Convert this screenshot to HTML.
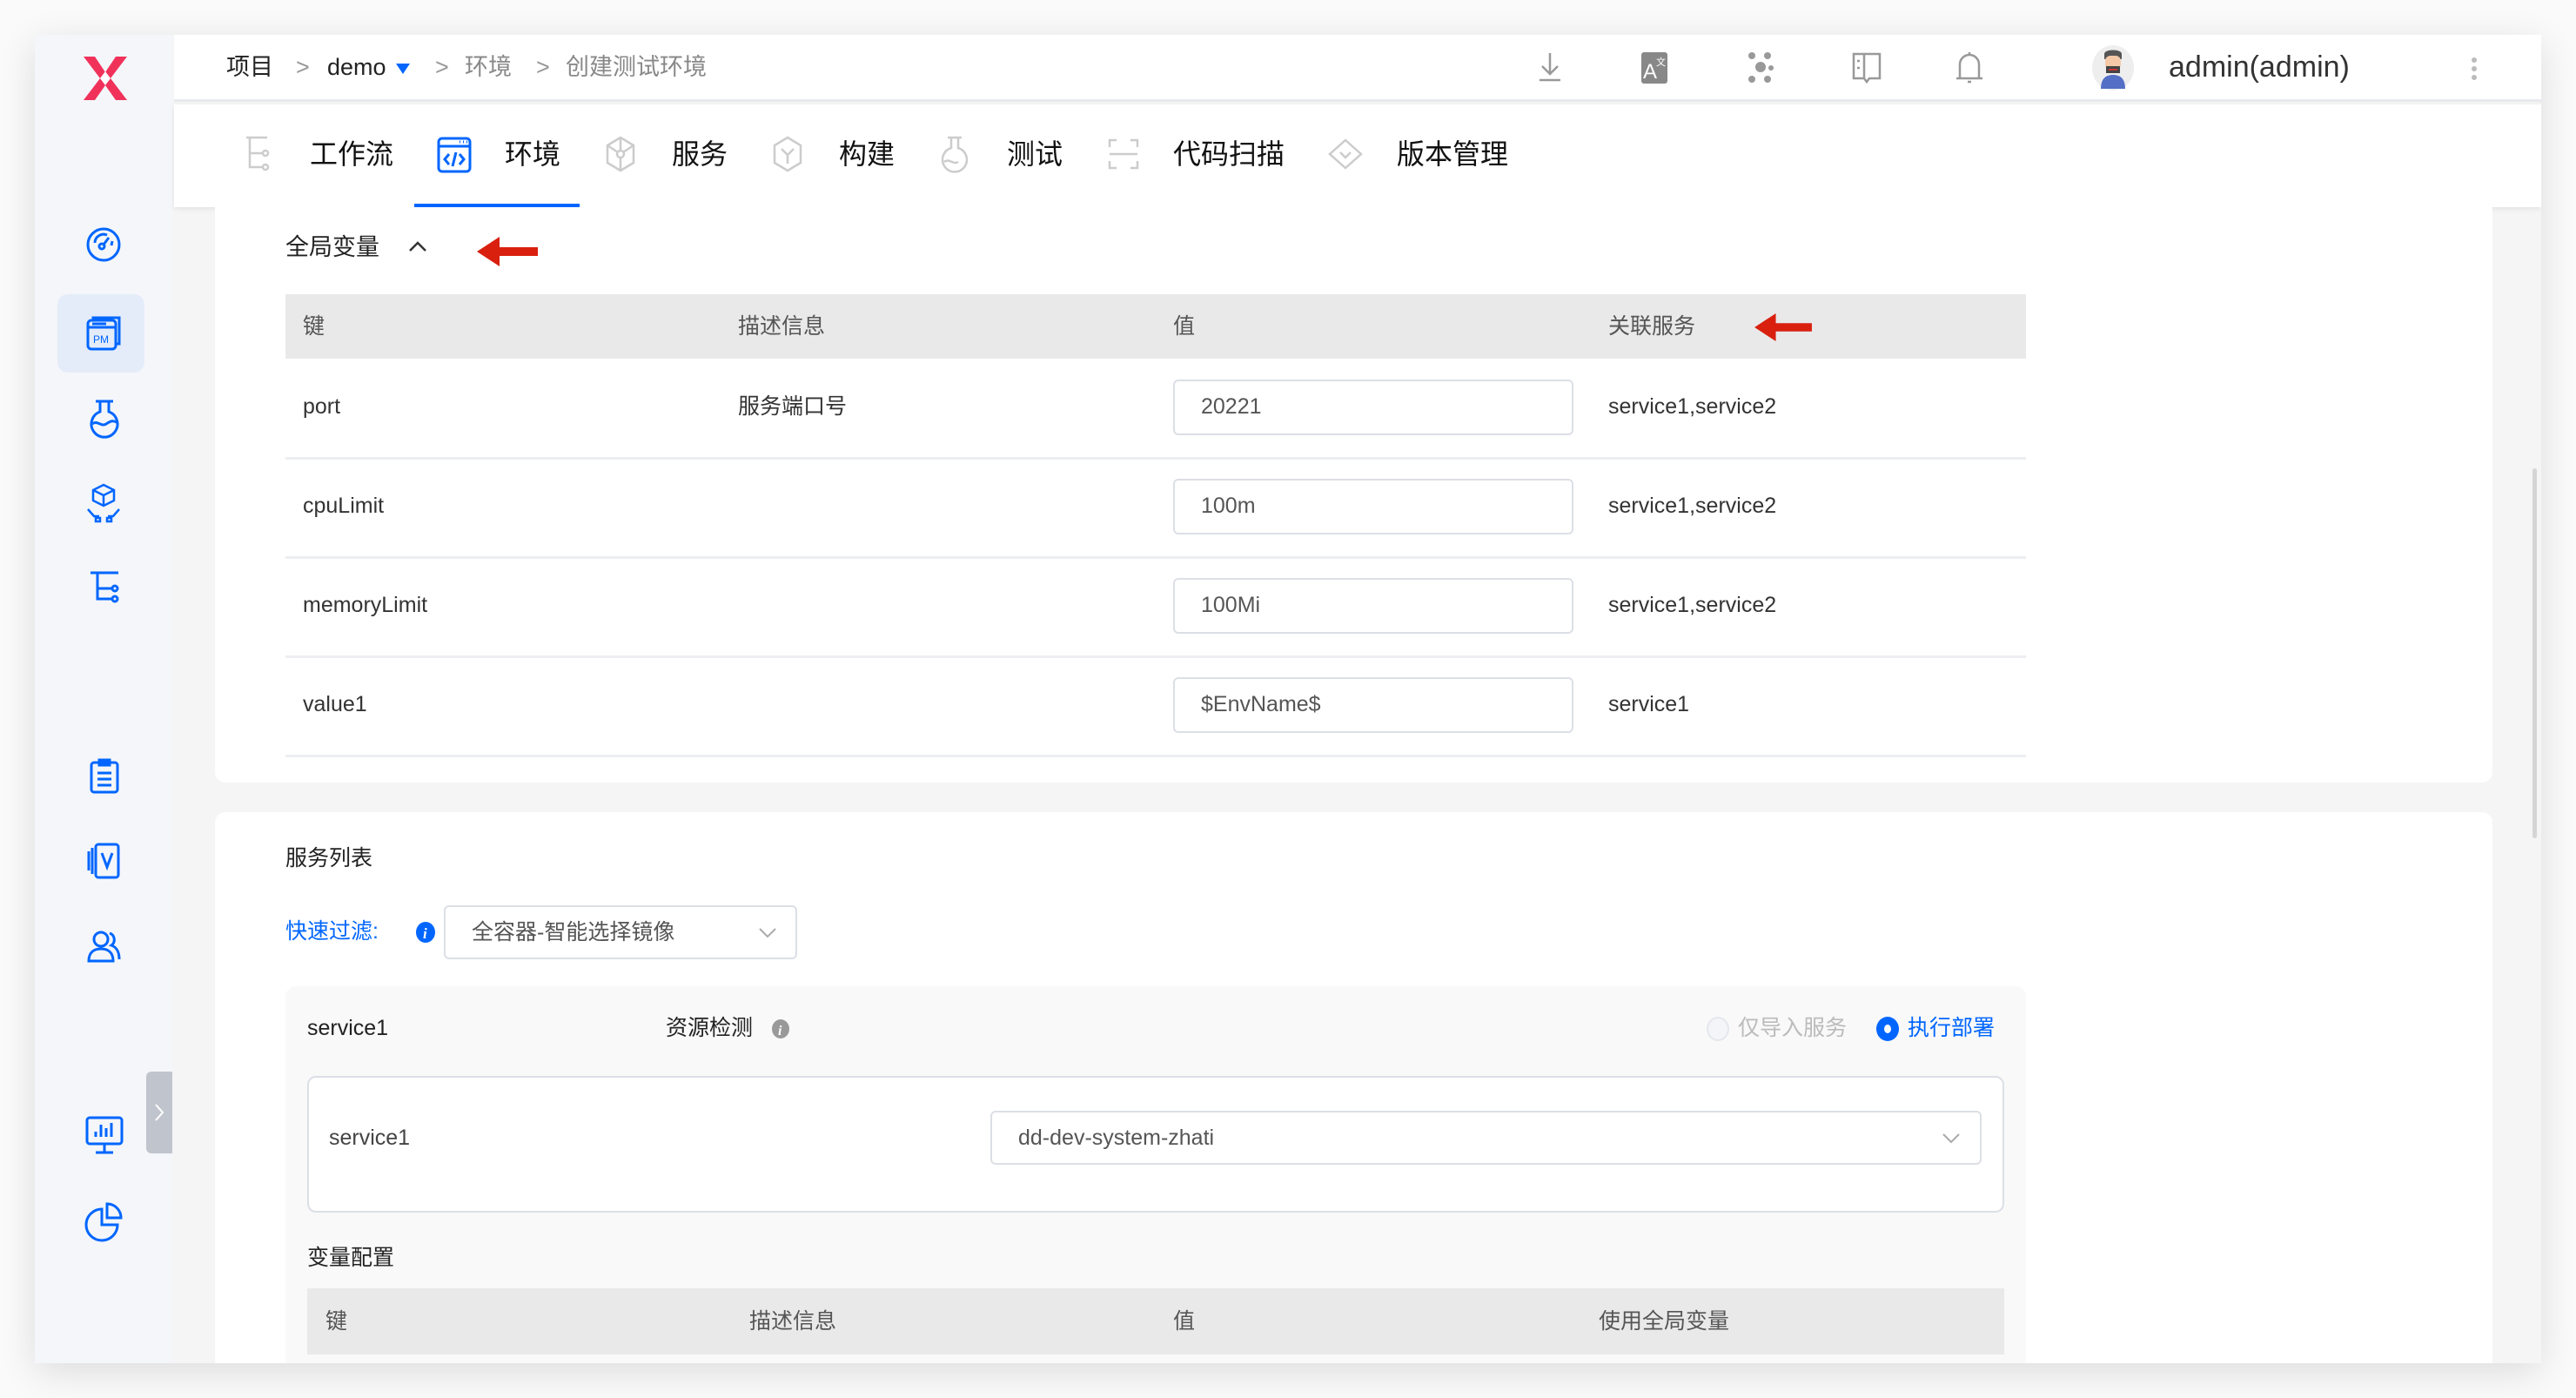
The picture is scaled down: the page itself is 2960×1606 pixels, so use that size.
<!DOCTYPE html>
<html><head><meta charset="utf-8">
<style>
*{margin:0;padding:0;box-sizing:border-box}
body{width:2960px;height:1606px;background:#fafafa;font-family:"Liberation Sans","Noto Sans CJK SC",sans-serif;position:relative;overflow:hidden;color:#333}
.a{position:absolute;white-space:nowrap}
#win{position:absolute;left:40px;top:40px;width:2880px;height:1526px;background:#f5f5f5;box-shadow:0 10px 40px rgba(0,0,0,.12);overflow:hidden}
.t28{font-size:27px;line-height:1}
.t26{font-size:25px;line-height:1}
.inp{position:absolute;background:#fff;border:2px solid #dcdfe6;border-radius:6px}
svg{position:absolute;overflow:visible}
</style></head><body>
<div id="win">
  <!-- sidebar -->
  <div class="a" style="left:0;top:0;width:158px;height:1526px;background:#f4f6fa"></div>
  <svg style="left:54px;top:25px" width="54" height="50" viewBox="0 0 54 50"><path d="M2 0h13l12 18 12-18h13L33 25l19 25H39L27 33 15 50H2l19-25z" fill="#f0325a"/><path d="M21 25l6-8 6 8-6 8z" fill="#fff"/></svg>
  <div class="a" style="left:26px;top:298px;width:100px;height:90px;background:#e4ecf9;border-radius:12px"></div>
  <svg style="left:59px;top:221px" width="40" height="40" viewBox="0 0 40 40" fill="none" stroke="#0066ff" stroke-width="3"><circle cx="20" cy="20" r="18"/><path d="M10 18a10 10 0 0 1 14-9"/><path d="M30 16l-1 5"/><circle cx="18" cy="22" r="3"/><path d="M20 20l6-8"/></svg>
  <svg style="left:59px;top:321px" width="42" height="42" viewBox="0 0 42 42" fill="none" stroke="#0066ff" stroke-width="3"><rect x="2" y="7" width="32" height="33" rx="4"/><path d="M8 7V4h30v30h-4"/><path d="M2 15h32M7 11h16"/><text x="8" y="33" font-size="12" fill="#0066ff" stroke="none" font-family="Liberation Sans">PM</text></svg>
  <svg style="left:62px;top:419px" width="36" height="42" viewBox="0 0 36 42" fill="none" stroke="#0066ff" stroke-width="3"><path d="M8 2h20M13 2v12a15 15 0 1 0 10 0V2"/><path d="M4 28c6-5 10 4 16 0s8-4 12-2"/></svg>
  <svg style="left:58px;top:515px" width="42" height="46" viewBox="0 0 42 46" fill="none" stroke="#0066ff" stroke-width="2.5"><path d="M21 2l12 6v12l-12 6-12-6V8zM9 8l12 6 12-6M21 14v12"/><path d="M3 30l7 8h6M39 30l-7 8h-6M12 40h5v4h-5zM25 40h5v4h-5z"/></svg>
  <svg style="left:62px;top:616px" width="36" height="40" viewBox="0 0 36 40" fill="none" stroke="#0066ff" stroke-width="3"><path d="M2 2h32M10 2v30h16M10 20h16"/><circle cx="30" cy="20" r="3"/><circle cx="30" cy="32" r="3"/></svg>
  <svg style="left:62px;top:830px" width="36" height="42" viewBox="0 0 36 42" fill="none" stroke="#0066ff" stroke-width="3"><rect x="3" y="6" width="30" height="34" rx="3"/><path d="M12 3h12v6H12zM10 18h16M10 25h16M10 32h16"/></svg>
  <svg style="left:60px;top:928px" width="40" height="42" viewBox="0 0 40 42" fill="none" stroke="#0066ff" stroke-width="3"><rect x="10" y="2" width="26" height="38" rx="3"/><path d="M6 6v30M2 10v22"/><path d="M17 12l6 16 6-16"/></svg>
  <svg style="left:60px;top:1028px" width="40" height="42" viewBox="0 0 40 42" fill="none" stroke="#0066ff" stroke-width="3"><circle cx="16" cy="11" r="8"/><path d="M2 36c0-10 6-14 14-14s14 4 14 14zM26 4a8 8 0 0 1 2 14c6 2 9 8 9 16"/></svg>
  <svg style="left:58px;top:1242px" width="44" height="44" viewBox="0 0 44 44" fill="none" stroke="#0066ff" stroke-width="3"><rect x="2" y="2" width="40" height="30" rx="3"/><path d="M22 32v10M12 42h20M12 24v-6M18 24V10M24 24v-10M30 24V8"/></svg>
  <svg style="left:59px;top:1341px" width="42" height="44" viewBox="0 0 42 44" fill="none" stroke="#0066ff" stroke-width="3"><path d="M18 8a18 18 0 1 0 18 18H18z"/><path d="M24 2a16 16 0 0 1 16 16H24z"/></svg>
  <div class="a" style="left:128px;top:1191px;width:30px;height:94px;background:#c0c4cc;border-radius:6px 0 0 6px"></div>
  <svg style="left:138px;top:1228px" width="10" height="20" viewBox="0 0 10 20" fill="none" stroke="#fff" stroke-width="2"><path d="M1 1l8 9-8 9"/></svg>

  <!-- header -->
  <div class="a" style="left:160px;top:0;width:2720px;height:77px;background:#fff;border-bottom:3px solid #e8eaee"></div>
  <div class="a t28" style="left:220px;top:24px;color:#222">项目</div>
  <div class="a t28" style="left:300px;top:24px;color:#999">&gt;</div>
  <div class="a t28" style="left:336px;top:24px;color:#222">demo</div>
  <svg style="left:415px;top:33px" width="16" height="12" viewBox="0 0 16 12"><path d="M0 0h16L8 12z" fill="#0066ff"/></svg>
  <div class="a t28" style="left:460px;top:24px;color:#999">&gt;</div>
  <div class="a t28" style="left:494px;top:24px;color:#888">环境</div>
  <div class="a t28" style="left:576px;top:24px;color:#999">&gt;</div>
  <div class="a t28" style="left:610px;top:24px;color:#888">创建测试环境</div>
  <svg style="left:1727px;top:20px" width="28" height="34" viewBox="0 0 28 34" fill="none" stroke="#999" stroke-width="2.5"><path d="M14 1v24M5 16l9 9 9-9M2 32h24"/></svg>
  <svg style="left:1846px;top:20px" width="32" height="36" viewBox="0 0 32 36"><rect width="30" height="36" rx="3" fill="#888"/><text x="2" y="30" font-size="24" fill="#fff" font-family="Liberation Sans">A</text><text x="17" y="15" font-size="11" fill="#fff" font-family="Noto Sans CJK SC">文</text></svg>
  <svg style="left:1968px;top:20px" width="30" height="36" viewBox="0 0 30 36" fill="#999"><circle cx="5" cy="4" r="4"/><circle cx="23" cy="4" r="4"/><circle cx="15" cy="17" r="6"/><circle cx="5" cy="31" r="4"/><circle cx="23" cy="31" r="4"/><circle cx="27" cy="18" r="3"/></svg>
  <svg style="left:2088px;top:20px" width="34" height="36" viewBox="0 0 34 36" fill="none" stroke="#999" stroke-width="2.5"><path d="M2 2h30v28H20l-3 4-3-4H2zM14 2v28M6 10h3M6 18h3"/></svg>
  <svg style="left:2207px;top:18px" width="32" height="40" viewBox="0 0 32 40" fill="none" stroke="#999" stroke-width="2.5"><path d="M16 2v3M5 32V16a11 11 0 0 1 22 0v16M1 32h30M14 36h4"/></svg>
  <div class="a" style="left:2364px;top:12px;width:48px;height:52px;border-radius:50%;background:#eee"></div>
  <svg style="left:2372px;top:14px" width="32" height="48" viewBox="0 0 32 48"><path d="M6 8c0-6 20-6 20 0v6H6z" fill="#555"/><rect x="7" y="10" width="18" height="16" rx="6" fill="#f5c9a8"/><path d="M8 22h16v8H8z" fill="#444"/><path d="M11 26h10" stroke="#c33" stroke-width="2"/><path d="M2 48c0-12 6-16 14-16s14 4 14 16z" fill="#5470c6"/></svg>
  <div class="a" style="left:2452px;top:20px;font-size:34px;line-height:1;color:#333">admin(admin)</div>
  <svg style="left:2800px;top:26px" width="6" height="26" viewBox="0 0 6 26" fill="#bbb"><circle cx="3" cy="3" r="3"/><circle cx="3" cy="13" r="3"/><circle cx="3" cy="23" r="3"/></svg>

  <!-- tab bar -->
  <div class="a" style="left:160px;top:80px;width:2720px;height:118px;background:#fff;box-shadow:0 2px 6px rgba(0,0,0,.08)"></div>
  <svg style="left:241px;top:116px" width="30" height="40" viewBox="0 0 30 40" fill="none" stroke="#ccc" stroke-width="2.5"><path d="M2 2h24M6 2v34h14M6 20h14"/><circle cx="24" cy="20" r="3"/><circle cx="24" cy="36" r="3"/></svg>
  <div class="a" style="left:316px;top:121px;font-size:32px;line-height:1;color:#111">工作流</div>
  <svg style="left:462px;top:117px" width="40" height="42" viewBox="0 0 40 42" fill="none" stroke="#0066ff" stroke-width="3"><rect x="2" y="2" width="36" height="38" rx="4"/><path d="M2 11h36M26 6h1M30 6h1M34 6h1M14 20l-5 6 5 6M26 20l5 6-5 6M22 18l-4 16"/></svg>
  <div class="a" style="left:540px;top:121px;font-size:32px;line-height:1;color:#111">环境</div>
  <div class="a" style="left:436px;top:194px;width:190px;height:4px;background:#0066ff"></div>
  <svg style="left:655px;top:116px" width="36" height="42" viewBox="0 0 36 42" fill="none" stroke="#ccc" stroke-width="2.5"><path d="M18 2l15 9v20l-15 9-15-9V11z"/><circle cx="18" cy="21" r="4"/><path d="M18 2v15M3 11l12 8M33 11l-12 8M18 25v15"/></svg>
  <div class="a" style="left:732px;top:121px;font-size:32px;line-height:1;color:#111">服务</div>
  <svg style="left:848px;top:116px" width="34" height="42" viewBox="0 0 34 42" fill="none" stroke="#ccc" stroke-width="2.5"><path d="M17 2l15 9v20l-15 9-15-9V11z"/><path d="M10 15l7 7 7-7M17 22v10"/></svg>
  <div class="a" style="left:924px;top:121px;font-size:32px;line-height:1;color:#111">构建</div>
  <svg style="left:1040px;top:116px" width="34" height="42" viewBox="0 0 34 42" fill="none" stroke="#ccc" stroke-width="2.5"><path d="M9 2h16M13 2v12a14 14 0 1 0 8 0V2"/><path d="M5 30c6-5 10 4 16 0"/></svg>
  <div class="a" style="left:1117px;top:121px;font-size:32px;line-height:1;color:#111">测试</div>
  <svg style="left:1233px;top:119px" width="36" height="36" viewBox="0 0 36 36" fill="none" stroke="#ccc" stroke-width="2.5"><path d="M2 10V2h8M26 2h8v8M34 26v8h-8M10 34H2v-8M2 18h32"/></svg>
  <div class="a" style="left:1308px;top:121px;font-size:32px;line-height:1;color:#111">代码扫描</div>
  <svg style="left:1486px;top:119px" width="40" height="36" viewBox="0 0 40 36" fill="none" stroke="#ccc" stroke-width="2.5"><path d="M20 2l18 16-18 16L2 18z"/><path d="M14 16l6 6 6-6"/></svg>
  <div class="a" style="left:1565px;top:121px;font-size:32px;line-height:1;color:#111">版本管理</div>

  <!-- card 1 -->
  <div class="a" style="left:207px;top:198px;width:2617px;height:661px;background:#fff;border-radius:0 0 12px 12px"></div>
  <div class="a t28" style="left:288px;top:231px;color:#222">全局变量</div>
  <svg style="left:430px;top:237px" width="20" height="12" viewBox="0 0 20 12" fill="none" stroke="#333" stroke-width="2.5"><path d="M1 11l9-9 9 9"/></svg>
  <svg style="left:508px;top:232px" width="70" height="34" viewBox="0 0 70 34"><path d="M0 17L26 0v12h44v10H26v12z" fill="#d9200f"/></svg>
  <div class="a" style="left:288px;top:298px;width:2000px;height:74px;background:#e9e9e9"></div>
  <div class="a t26" style="left:308px;top:323px;color:#555">键</div>
  <div class="a t26" style="left:808px;top:323px;color:#555">描述信息</div>
  <div class="a t26" style="left:1308px;top:323px;color:#555">值</div>
  <div class="a t26" style="left:1808px;top:323px;color:#555">关联服务</div>
  <svg style="left:1974px;top:320px" width="70" height="32" viewBox="0 0 70 34"><path d="M0 17L26 0v12h44v10H26v12z" fill="#d9200f"/></svg>

  <div class="a" style="left:288px;top:485px;width:2000px;height:3px;background:#eceef2"></div>
  <div class="a" style="left:288px;top:599px;width:2000px;height:3px;background:#eceef2"></div>
  <div class="a" style="left:288px;top:713px;width:2000px;height:3px;background:#eceef2"></div>
  <div class="a" style="left:288px;top:827px;width:2000px;height:3px;background:#eceef2"></div>

  <div class="a t26" style="left:308px;top:415px;color:#333">port</div>
  <div class="a t26" style="left:808px;top:415px;color:#333">服务端口号</div>
  <div class="inp" style="left:1308px;top:396px;width:460px;height:64px"></div>
  <div class="a t26" style="left:1340px;top:415px;color:#555">20221</div>
  <div class="a t26" style="left:1808px;top:415px;color:#333">service1,service2</div>

  <div class="a t26" style="left:308px;top:529px;color:#333">cpuLimit</div>
  <div class="inp" style="left:1308px;top:510px;width:460px;height:64px"></div>
  <div class="a t26" style="left:1340px;top:529px;color:#555">100m</div>
  <div class="a t26" style="left:1808px;top:529px;color:#333">service1,service2</div>

  <div class="a t26" style="left:308px;top:643px;color:#333">memoryLimit</div>
  <div class="inp" style="left:1308px;top:624px;width:460px;height:64px"></div>
  <div class="a t26" style="left:1340px;top:643px;color:#555">100Mi</div>
  <div class="a t26" style="left:1808px;top:643px;color:#333">service1,service2</div>

  <div class="a t26" style="left:308px;top:757px;color:#333">value1</div>
  <div class="inp" style="left:1308px;top:738px;width:460px;height:64px"></div>
  <div class="a t26" style="left:1340px;top:757px;color:#555">$EnvName$</div>
  <div class="a t26" style="left:1808px;top:757px;color:#333">service1</div>

  <!-- card 2 -->
  <div class="a" style="left:207px;top:893px;width:2617px;height:700px;background:#fff;border-radius:12px"></div>
  <div class="a t26" style="left:288px;top:934px;color:#222">服务列表</div>
  <div class="a t26" style="left:288px;top:1018px;color:#0066ff">快速过滤:</div>
  <svg style="left:437px;top:1018px" width="24" height="26" viewBox="0 0 24 26"><ellipse cx="12" cy="13" rx="11" ry="12" fill="#0066ff"/><text x="9" y="20" font-size="17" font-style="italic" font-weight="bold" fill="#fff" font-family="Liberation Serif">i</text></svg>
  <div class="inp" style="left:470px;top:1000px;width:406px;height:62px"></div>
  <div class="a t26" style="left:502px;top:1019px;color:#555">全容器-智能选择镜像</div>
  <svg style="left:832px;top:1026px" width="20" height="12" viewBox="0 0 20 12" fill="none" stroke="#aaa" stroke-width="2"><path d="M1 1l9 9 9-9"/></svg>

  <div class="a" style="left:288px;top:1093px;width:2000px;height:440px;background:#f9f9f9;border-radius:12px"></div>
  <div class="a t26" style="left:313px;top:1129px;color:#222">service1</div>
  <div class="a t26" style="left:725px;top:1129px;color:#222">资源检测</div>
  <svg style="left:846px;top:1130px" width="22" height="24" viewBox="0 0 22 24"><ellipse cx="11" cy="12" rx="10" ry="11" fill="#999"/><text x="8" y="19" font-size="16" font-style="italic" font-weight="bold" fill="#fff" font-family="Liberation Serif">i</text></svg>
  <div class="a" style="left:1921px;top:1128px;width:26px;height:28px;border-radius:50%;border:2px solid #e4e7ed;background:#f3f5f8"></div>
  <div class="a t26" style="left:1957px;top:1129px;color:#bbb">仅导入服务</div>
  <div class="a" style="left:2116px;top:1128px;width:26px;height:28px;border-radius:50%;background:#0066ff"></div>
  <div class="a" style="left:2125px;top:1137px;width:8px;height:10px;border-radius:50%;background:#fff"></div>
  <div class="a t26" style="left:2152px;top:1129px;color:#0066ff">执行部署</div>

  <div class="a" style="left:313px;top:1196px;width:1950px;height:157px;background:#fff;border:2px solid #dcdfe6;border-radius:10px"></div>
  <div class="a t26" style="left:338px;top:1255px;color:#444">service1</div>
  <div class="inp" style="left:1098px;top:1236px;width:1139px;height:62px"></div>
  <div class="a t26" style="left:1130px;top:1255px;color:#555">dd-dev-system-zhati</div>
  <svg style="left:2192px;top:1262px" width="20" height="12" viewBox="0 0 20 12" fill="none" stroke="#aaa" stroke-width="2"><path d="M1 1l9 9 9-9"/></svg>

  <div class="a t26" style="left:313px;top:1393px;color:#222">变量配置</div>
  <div class="a" style="left:313px;top:1440px;width:1950px;height:76px;background:#e9e9e9"></div>
  <div class="a t26" style="left:334px;top:1466px;color:#555">键</div>
  <div class="a t26" style="left:821px;top:1466px;color:#555">描述信息</div>
  <div class="a t26" style="left:1308px;top:1466px;color:#555">值</div>
  <div class="a t26" style="left:1797px;top:1466px;color:#555">使用全局变量</div>

  <div class="a" style="left:2870px;top:498px;width:5px;height:425px;background:#d5d5d5;border-radius:3px"></div>
</div>
</body></html>
